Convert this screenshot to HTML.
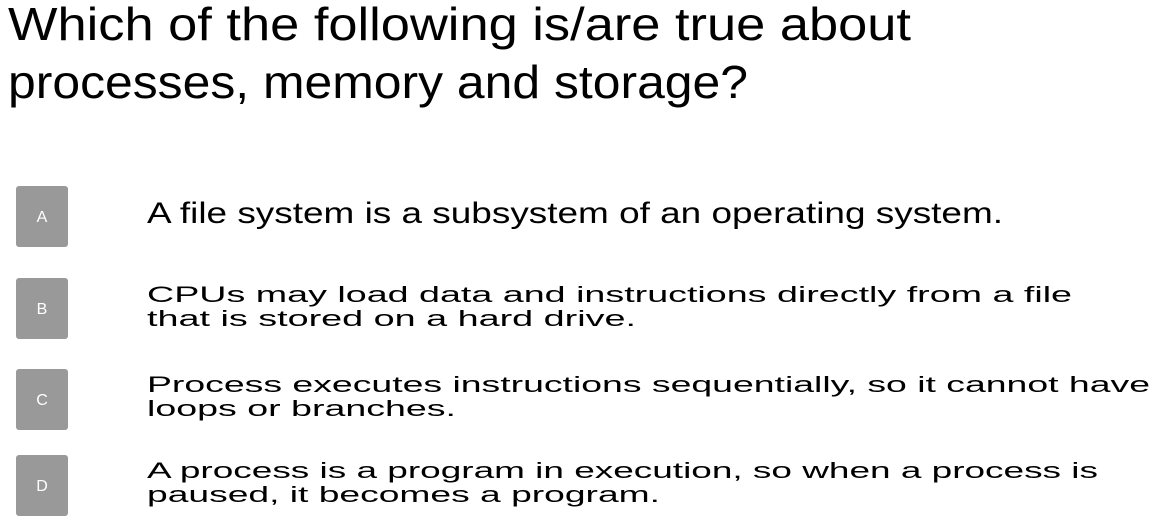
<!DOCTYPE html>
<html><head><meta charset="utf-8"><style>
html,body{margin:0;padding:0;background:#fff;width:1157px;height:522px;overflow:hidden}
svg{display:block}
text{font-family:"Liberation Sans","DejaVu Sans",sans-serif;fill:#000}
.l{fill:#fff;font-size:16px}
</style></head><body>
<svg width="1157" height="522" viewBox="0 0 1157 522">
<text x="8" y="40" font-size="46" textLength="903" lengthAdjust="spacingAndGlyphs">Which of the following is/are true about</text>
<text x="8" y="98" font-size="46" textLength="740" lengthAdjust="spacingAndGlyphs">processes, memory and storage?</text>

<rect x="16" y="186" width="52" height="61" rx="3" fill="#999"/>
<text class="l" x="42" y="222" text-anchor="middle">A</text>
<rect x="16" y="278" width="52" height="61" rx="3" fill="#999"/>
<text class="l" x="42" y="314" text-anchor="middle">B</text>
<rect x="16" y="369" width="52" height="61" rx="3" fill="#999"/>
<text class="l" x="42" y="405" text-anchor="middle">C</text>
<rect x="16" y="455" width="52" height="61" rx="3" fill="#999"/>
<text class="l" x="42" y="491" text-anchor="middle">D</text>

<text x="147" y="223" font-size="30" textLength="856" lengthAdjust="spacingAndGlyphs">A file system is a subsystem of an operating system.</text>

<text x="147" y="302" font-size="22" textLength="925" lengthAdjust="spacingAndGlyphs">CPUs may load data and instructions directly from a file</text>
<text x="147" y="326" font-size="22" textLength="489" lengthAdjust="spacingAndGlyphs">that is stored on a hard drive.</text>

<text x="147" y="392" font-size="22" textLength="1003" lengthAdjust="spacingAndGlyphs">Process executes instructions sequentially, so it cannot have</text>
<text x="147" y="416" font-size="22" textLength="309" lengthAdjust="spacingAndGlyphs">loops or branches.</text>

<text x="147" y="478" font-size="22" textLength="951" lengthAdjust="spacingAndGlyphs">A process is a program in execution, so when a process is</text>
<text x="147" y="502" font-size="22" textLength="513" lengthAdjust="spacingAndGlyphs">paused, it becomes a program.</text>
</svg>
</body></html>
